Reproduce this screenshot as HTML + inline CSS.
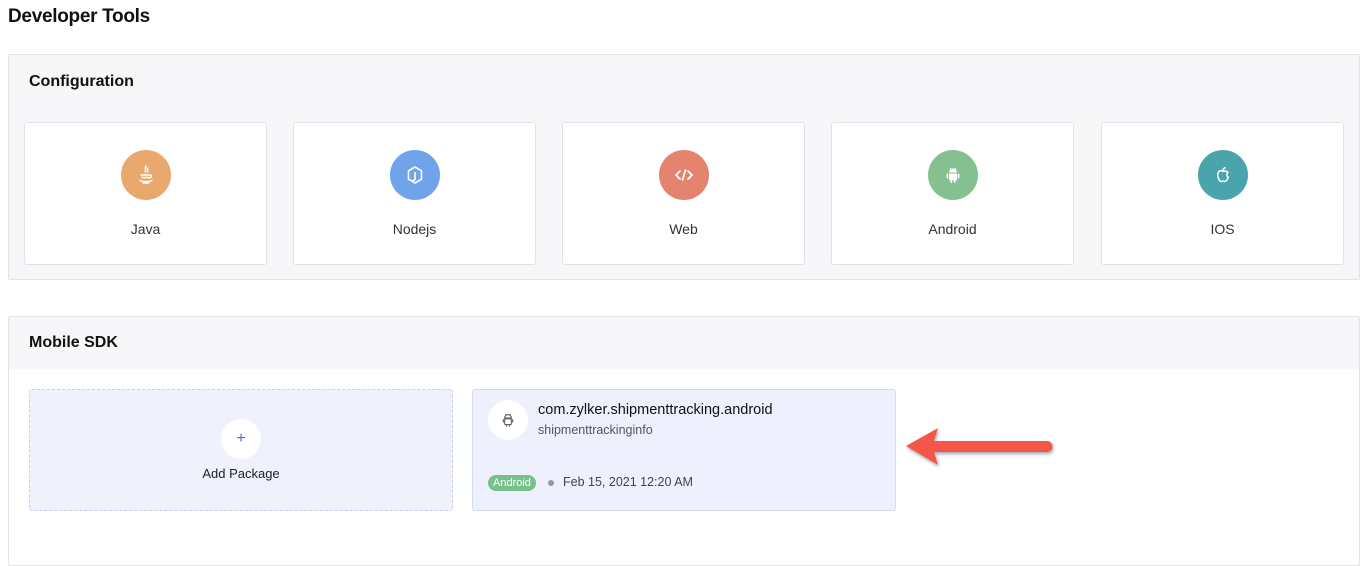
<!DOCTYPE html>
<html><head><meta charset="utf-8"><style>
*{box-sizing:border-box;margin:0;padding:0}
body{width:1372px;height:553px;background:#fff;font-family:"Liberation Sans",sans-serif;color:#222;position:relative;overflow:hidden}
.abs{position:absolute}
h1{position:absolute;left:8px;top:6px;font-size:19px;font-weight:bold;color:#111;letter-spacing:-0.3px}
.panel{position:absolute;left:8px;width:1352px;background:#f7f7f9;border:1px solid #e3e4ea;border-radius:2px}
.ptitle{position:absolute;left:20px;font-size:16px;font-weight:bold;color:#111}
.card{position:absolute;top:67px;width:243px;height:143px;background:#fff;border:1px solid #e2e3e8;border-radius:3px}
.card .ic{position:absolute;left:50%;top:27px;margin-left:-25px;width:50px;height:50px;border-radius:50%}
.card .ic svg{position:absolute;left:13px;top:13px}
.card .lb{position:absolute;left:0;right:0;top:98px;text-align:center;font-size:14px;color:#333}
</style></head><body>
<h1>Developer Tools</h1>
<div class="panel" style="top:54px;height:226px">
 <div class="ptitle" style="top:18px">Configuration</div>
 <div class="card" style="left:15px"><div class="ic" style="background:#e9a96e"><svg width="24" height="24" viewBox="0 0 24 24" fill="none" stroke="#fff" stroke-width="1.4" stroke-linecap="round"><path d="M12 3c-2 2 1 3-1 6M14 5c-1.5 1.5 1 2-0.5 4"/><path d="M7 12h9M8 14.5h7M16 12c2 0 2 3-1 3"/><path d="M6 17.5c3 1.5 9 1.5 12 0M9 20h6"/></svg></div><div class="lb">Java</div></div>
 <div class="card" style="left:284px"><div class="ic" style="background:#6fa3ea"><svg width="24" height="24" viewBox="0 0 24 24" fill="none" stroke="#fff" stroke-width="1.6" stroke-linejoin="round"><path d="M12 4l6.5 3.8v8.4L12 20l-6.5-3.8V7.8z"/><path d="M12 9v7c0 1.5-2 1.5-2.5 1"/></svg></div><div class="lb">Nodejs</div></div>
 <div class="card" style="left:553px"><div class="ic" style="background:#e4846f"><svg width="24" height="24" viewBox="0 0 24 24" fill="none" stroke="#fff" stroke-width="1.7" stroke-linecap="round"><path d="M8 8l-4 4 4 4M16 8l4 4-4 4M13.5 7l-3 10"/></svg></div><div class="lb">Web</div></div>
 <div class="card" style="left:822px"><div class="ic" style="background:#85c190"><svg width="24" height="24" viewBox="0 0 24 24" fill="#fff"><path d="M8 9.5a4 4 0 0 1 8 0z"/><rect x="8" y="10.5" width="8" height="7" rx="1"/><rect x="5.6" y="10.5" width="1.6" height="5" rx=".8"/><rect x="16.8" y="10.5" width="1.6" height="5" rx=".8"/><rect x="9.5" y="17" width="1.6" height="3" rx=".8"/><rect x="12.9" y="17" width="1.6" height="3" rx=".8"/><path d="M9 5l1 1.5M15 5l-1 1.5" stroke="#fff" stroke-width="1"/></svg></div><div class="lb">Android</div></div>
 <div class="card" style="left:1092px"><div class="ic" style="background:#4aa4ac"><svg width="24" height="24" viewBox="0 0 24 24" fill="none" stroke="#fff" stroke-width="1.5"><path d="M12 8.5c-1-1-4-1.5-5 1.5-1 3 1 8 3 8.5 1 .2 1.5-.5 2-.5s1 .7 2 .5c1.5-.3 3-3 3.3-4.3-1.8-.8-2-3.6-.3-4.7-1.5-2-4-1.5-5-1z"/><path d="M12 8c0-2 1-3 2.5-3.5"/></svg></div><div class="lb">IOS</div></div>
</div>
<div class="panel" style="top:316px;height:250px;background:#fff">
 <div class="abs" style="left:0;top:0;width:100%;height:52px;background:#f7f7f9"></div>
 <div class="ptitle" style="top:17px">Mobile SDK</div>
 <div class="abs" style="left:20px;top:72px;width:424px;height:122px;background:#eff1fd;border:1px dashed #cbd1ee;border-radius:3px">
  <div class="abs" style="left:191px;top:29px;width:40px;height:40px;border-radius:50%;background:#fff;text-align:center;line-height:39px;color:#4a6ad0;font-size:16px">+</div>
  <div class="abs" style="left:0;right:0;top:76px;text-align:center;font-size:13px;color:#222">Add Package</div>
 </div>
 <div class="abs" style="left:463px;top:72px;width:424px;height:122px;background:#eef0fd;border:1px solid #d3d9f0;border-radius:3px">
  <div class="abs" style="left:15px;top:10px;width:40px;height:40px;border-radius:50%;background:#fff"><svg class="abs" style="left:10px;top:10px" width="20" height="20" viewBox="0 0 24 24" fill="none" stroke="#666" stroke-width="1.4"><path d="M8 9.5a4 4 0 0 1 8 0z"/><rect x="8" y="10.5" width="8" height="7" rx="1"/><path d="M6.4 11v4M17.6 11v4M10.3 17.5v2.5M13.7 17.5v2.5M9 5l1 1.5M15 5l-1 1.5"/></svg></div>
  <div class="abs" style="left:65px;top:12px;font-size:14.5px;color:#111">com.zylker.shipmenttracking.android</div>
  <div class="abs" style="left:65px;top:33px;font-size:12.5px;color:#555">shipmenttrackinginfo</div>
  <div class="abs" style="left:15px;top:85px;height:16px;padding:0 5px;background:#77c08a;color:#fff;border-radius:8px;font-size:11px;line-height:16px">Android</div>
  <div class="abs" style="left:75px;top:90px;width:6px;height:6px;border-radius:50%;background:#999"></div>
  <div class="abs" style="left:90px;top:85px;font-size:12.5px;color:#444">Feb 15, 2021 12:20 AM</div>
 </div>
</div>
<svg class="abs" style="left:900px;top:422px" width="160" height="50" viewBox="900 422 160 50">
 <defs><filter id="s"><feDropShadow dx="1" dy="2" stdDeviation="1.5" flood-opacity="0.35"/></filter></defs>
 <g filter="url(#s)" fill="#f4574a"><path d="M906 446L938 428L934 441H1047a5.5 5.5 0 0 1 0 11H934L938 465z"/></g>
</svg>
</body></html>
